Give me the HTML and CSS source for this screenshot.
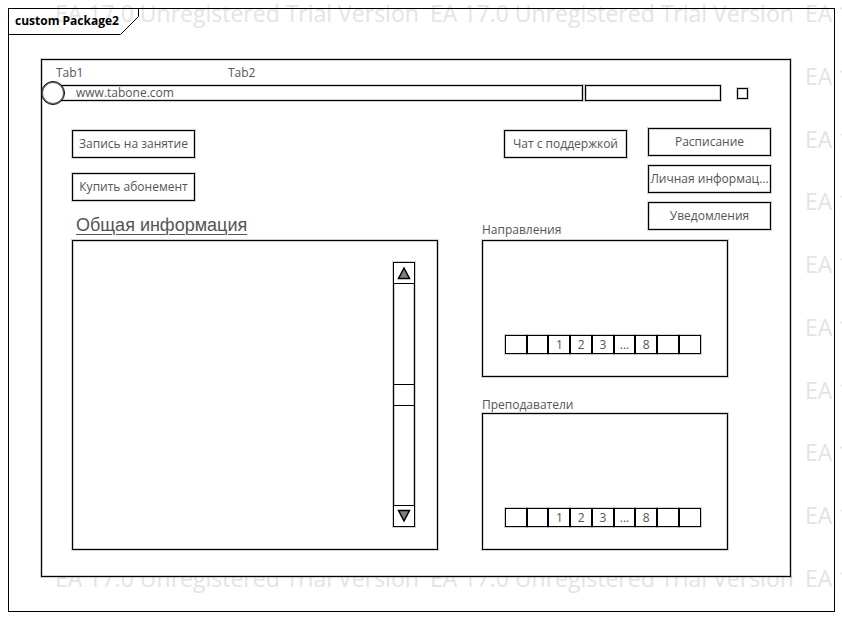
FILE: index.html
```html
<!DOCTYPE html>
<html lang="ru">
<head>
<meta charset="utf-8">
<title>Package2</title>
<link rel="stylesheet" href="styles.css">
</head>
<body>
<div class="watermark" aria-hidden="true">
  <div class="mark-row"><span>EA 17.0 Unregistered Trial Version</span><span>EA 17.0 Unregistered Trial Version</span><span>EA 17.0</span></div>
  <div class="mark-row side"><span>EA 1</span></div>
  <div class="mark-row side"><span>EA 1</span></div>
  <div class="mark-row side"><span>EA 1</span></div>
  <div class="mark-row side"><span>EA 1</span></div>
  <div class="mark-row side"><span>EA 1</span></div>
  <div class="mark-row side"><span>EA 1</span></div>
  <div class="mark-row side"><span>EA 1</span></div>
  <div class="mark-row side"><span>EA 1</span></div>
  <div class="mark-row"><span>EA 17.0 Unregistered Trial Version</span><span>EA 17.0 Unregistered Trial Version</span><span>EA 17.0</span></div>
</div>
<div class="frame">
  <div class="tag">
    <svg class="tag-line" viewBox="0 0 131 27" aria-hidden="true"><path d="M129.500 0V7.500L111.500 25.500H0" fill="none" stroke="#000"/></svg>
    <span>custom Package2</span>
  </div>
  <div class="window line">
    <nav class="tabs"><a href="#tab1">Tab1</a><a href="#tab2">Tab2</a></nav>
    <div class="toolbar">
      <button class="round" type="button" aria-label="Назад"></button>
      <input class="address line" type="text" value="www.tabone.com" aria-label="Адрес">
      <input class="search line" type="text" aria-label="Поиск">
      <button class="square line" type="button" aria-label="Меню"></button>
    </div>
    <main class="main">
      <section class="left">
        <button class="btn line" type="button">Запись на занятие</button>
        <button class="btn line" type="button">Купить абонемент</button>
        <h1>Общая информация</h1>
        <div class="panel info line">
          <div class="scroll line">
            <button class="arrow" type="button" aria-label="Вверх"><svg viewBox="0 0 14 14"><path d="M7 2L12.500 12.500H1.500Z"/></svg></button>
            <div class="thumb"></div>
            <button class="arrow" type="button" aria-label="Вниз"><svg viewBox="0 0 14 14"><path d="M1.500 1.500H12.500L7 12Z"/></svg></button>
          </div>
        </div>
      </section>
      <section class="right">
        <div class="top">
          <div class="support">
            <button class="btn line" type="button">Чат с поддержкой</button>
            <h2>Направления</h2>
          </div>
          <div class="menu">
            <button class="btn line" type="button">Расписание</button>
            <button class="btn line" type="button">Личная информац...</button>
            <button class="btn line" type="button">Уведомления</button>
          </div>
        </div>
        <div class="panel list line">
          <div class="pager"><button type="button"></button><button type="button"></button><button type="button">1</button><button type="button">2</button><button type="button">3</button><button type="button">...</button><button type="button">8</button><button type="button"></button><button type="button"></button></div>
        </div>
        <h2 class="second">Преподаватели</h2>
        <div class="panel list line">
          <div class="pager"><button type="button"></button><button type="button"></button><button type="button">1</button><button type="button">2</button><button type="button">3</button><button type="button">...</button><button type="button">8</button><button type="button"></button><button type="button"></button></div>
        </div>
      </section>
    </main>
  </div>
</div>
</body>
</html>
```
FILE: styles.css
```css
* { box-sizing: border-box; }
body {
  margin: 0;
  position: relative;
  display: flow-root;
  background: #fff;
  color: #555;
  font: 12px/16px "Open Sans", "Noto Sans", sans-serif;
}
button, input {
  margin: 0;
  padding: 0;
  border: 0;
  border-radius: 0;
  background: #fff;
  color: inherit;
  font: inherit;
}
.line {
  border: 1px solid #000;
  box-shadow: 0 0 0 1px rgba(0, 0, 0, .18), inset 0 0 0 1px rgba(0, 0, 0, .18);
}
.watermark {
  position: absolute;
  inset: 0 0 21px 0;
  padding: 0 0 8px 55px;
  display: flex;
  flex-direction: column;
  justify-content: space-between;
  overflow: hidden;
  color: #e4e4e4;
  font-size: 23px;
  line-height: 26px;
  white-space: nowrap;
}
.mark-row { display: grid; grid-template-columns: 375px 375px 375px; }
.side span { grid-column: 3; }
.frame {
  position: relative;
  margin: 8px 7px 8px 8px;
  border: 1px solid #000;
}
.tag {
  position: relative;
  width: 131px;
  height: 26px;
  padding: 4px 6px;
  color: #000;
  font-weight: 700;
  white-space: nowrap;
}
.tag-line { position: absolute; left: 0; top: 0; width: 131px; height: 27px; }
.window {
  margin: 24px 43px 34px 32px;
  padding: 5px 0 26px;
  background: #fff;
}
.tabs { display: flex; padding-left: 14px; }
.tabs a { width: 172px; color: inherit; text-decoration: none; }
.toolbar {
  display: flex;
  align-items: center;
  height: 24px;
  margin: 0 42px 23px -1px;
}
.round { position: relative; width: 24px; height: 24px; border: 1px solid #000; border-radius: 50%; box-shadow: inset 0 0 0 1px rgba(0, 0, 0, .6); }
.address { flex: 1; min-width: 0; height: 16px; margin-left: -10px; padding-left: 20px; }
.search { width: 136px; height: 16px; margin: 0 16px 0 2px; }
.square { width: 11px; height: 11px; }
.main {
  display: grid;
  grid-template-columns: 366fr 289fr;
  column-gap: 44px;
  padding: 0 19px 0 30px;
}
.btn { display: block; width: 123px; height: 28px; white-space: nowrap; }
.left { display: flex; flex-direction: column; padding-top: 2px; }
.left .btn + .btn { margin-top: 15px; }
h1 {
  margin: 13px 0 4px 4px;
  font: 18px/22px "Liberation Sans", sans-serif;
  text-decoration: underline;
  text-decoration-thickness: 1px;
  text-underline-offset: 3px;
}
h2 { margin: 0; font-size: 12px; font-weight: 400; line-height: 16px; }
.second { margin: 20px 0 0; }
.info { flex: 1; display: flex; justify-content: flex-end; padding: 21px 22px 22px; }
.scroll {
  display: flex;
  flex-direction: column;
  justify-content: space-between;
  width: 22px;
}
.arrow { display: grid; place-items: center; height: 21px; }
.arrow:first-child { border-bottom: 1px solid #000; }
.arrow:last-child { border-top: 1px solid #000; }
.arrow svg { width: 14px; height: 14px; fill: #808080; stroke: #000; stroke-width: 1.5; }
.thumb { height: 22px; border: solid #000; border-width: 1px 0; }
.top { display: flex; justify-content: space-between; height: 112px; }
.support { display: flex; flex-direction: column; justify-content: space-between; padding: 2px 0; }
.support .btn { margin-left: 22px; }
.menu { display: grid; align-content: start; row-gap: 9px; }
.list { display: flex; flex-direction: column; justify-content: flex-end; width: 85%; height: 137px; padding: 22px; }
.pager { display: grid; grid-template-columns: repeat(9, 1fr); width: 98%; }
.pager button { height: 19px; border: 1px solid #000; box-shadow: 0 0 0 1px rgba(0, 0, 0, .18); }
```
